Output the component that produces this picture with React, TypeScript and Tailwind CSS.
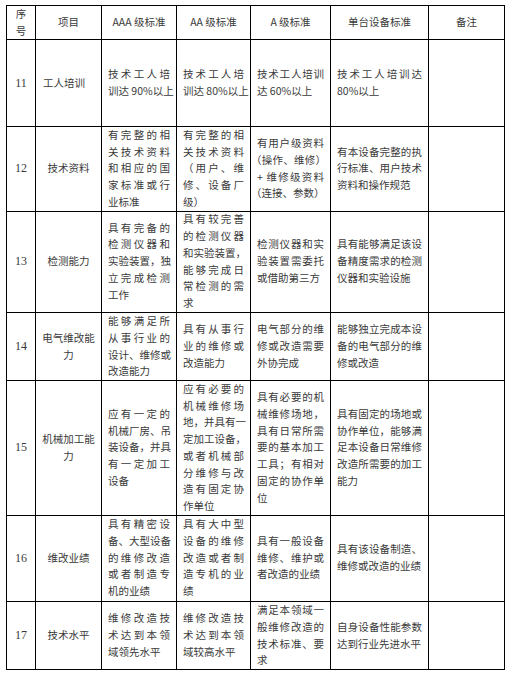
type Line = string | { t: string; cls: string };

type Row = {
  no: string;
  item: string[];
  itemLeft?: boolean;
  cols: Line[][];
  h: string;
};

const rows: Row[] = [
  {
    no: '11',
    item: ['工人培训'],
    itemLeft: true,
    h: 'h-[87px]',
    cols: [
      ['技术工人培', '训达 90%以上'],
      ['技术工人培', '训达 80%以上'],
      ['技术工人培训', '达 60%以上'],
      ['技术工人培训达', '80%以上'],
    ],
  },
  {
    no: '12',
    item: ['技术资料'],
    h: 'h-[84px]',
    cols: [
      ['有完整的相', '关技术资料', '和相应的国', '家标准或行', '业标准'],
      ['有完整的相', '关技术资料', '（用户、维', '修、设备厂', '级）'],
      [
        '有用户级资料',
        { t: '（操作、维修）', cls: '-ml-[6px] -mr-[2px]' },
        '+ 维修级资料',
        { t: '（连接、参数）', cls: '-ml-[6px] -mr-[2px]' },
      ],
      ['有本设备完整的执', '行标准、用户技术', '资料和操作规范'],
    ],
  },
  {
    no: '13',
    item: ['检测能力'],
    h: 'h-[102px]',
    cols: [
      ['具有完备的', '检测仪器和', '实验装置，独', '立完成检测', '工作'],
      ['具有较完善', '的检测仪器', '和实验装置，', '能够完成日', '常检测的需', '求'],
      ['检测仪器和实', '验装置需委托', '或借助第三方'],
      ['具有能够满足该设', '备精度需求的检测', '仪器和实验设施'],
    ],
  },
  {
    no: '14',
    item: ['电气维改能', '力'],
    h: 'h-[68px]',
    cols: [
      ['能够满足所', '从事行业的', '设计、维修或', '改造能力'],
      ['具有从事行', '业的维修或', '改造能力'],
      ['电气部分的维', '修或改造需要', '外协完成'],
      ['能够独立完成本设', '备的电气部分的维', '修或改造'],
    ],
  },
  {
    no: '15',
    item: ['机械加工能', '力'],
    h: 'h-[134px]',
    cols: [
      ['应有一定的', '机械厂房、吊', '装设备，并具', '有一定加工', '设备'],
      ['应有必要的', '机械维修场', '地，并具有一', '定加工设备，', '或者机械部', '分维修与改', '造有固定协', '作单位'],
      ['具有必要的机', '械维修场地，', '具有日常所需', '要的基本加工', '工具；有相对', '固定的协作单', '位'],
      ['具有固定的场地或', '协作单位，能够满', '足本设备日常维修', '改造所需要的加工', '能力'],
    ],
  },
  {
    no: '16',
    item: ['维改业绩'],
    h: 'h-[87px]',
    cols: [
      ['具有精密设', '备、大型设备', '的维修改造', '或者制造专', '机的业绩'],
      ['具有大中型', '设备的维修', '改造或者制', '造专机的业', '绩'],
      ['具有一般设备', '维修、维护或', '者改造的业绩'],
      ['具有该设备制造、', '维修或改造的业绩'],
    ],
  },
  {
    no: '17',
    item: ['技术水平'],
    h: 'h-[68px]',
    cols: [
      ['维修改造技', '术达到本领', '域领先水平'],
      ['维修改造技', '术达到本领', '域较高水平'],
      ['满足本领域一', '般维修改造的', '技术标准、要', '求'],
      ['自身设备性能参数', '达到行业先进水平'],
    ],
  },
];

const cell = 'border-r border-b border-black flex flex-col justify-center';

function TextCell({ lines }: { lines: Line[] }) {
  return (
    <div className={`${cell} px-[6px]`}>
      {lines.map((l, i) => {
        const t = typeof l === 'string' ? l : l.t;
        const extra = typeof l === 'string' ? '' : l.cls;
        const last = i === lines.length - 1;
        return (
          <div
            key={i}
            className={`whitespace-nowrap ${last ? 'text-left' : 'text-justify [text-align-last:justify]'} ${extra}`}
          >
            {t}
          </div>
        );
      })}
    </div>
  );
}

export default function App() {
  return (
    <div className="w-[512px] h-[678px] bg-white pt-[5px] pl-[6px] font-['Noto_Sans_CJK_SC',sans-serif] text-[10.5px] leading-[16.7px] text-[#3a3a3a]">
      <div className="w-[499px] border-l border-t border-black">
        {/* header */}
        <div className="grid grid-cols-[29px_66px_75px_74px_80px_98px_76px] h-[34px]">
          <div className={`${cell} items-center`}>
            <div>序</div>
            <div>号</div>
          </div>
          <div className={`${cell} items-center`}>项目</div>
          <div className={`${cell} items-center`}>AAA 级标准</div>
          <div className={`${cell} items-center`}>AA 级标准</div>
          <div className={`${cell} items-center`}>A 级标准</div>
          <div className={`${cell} items-center`}>单台设备标准</div>
          <div className={`${cell} items-center`}>备注</div>
        </div>

        {rows.map((r) => (
          <div key={r.no} className={`grid grid-cols-[29px_66px_75px_74px_80px_98px_76px] ${r.h}`}>
            <div className={`${cell} items-center font-['Liberation_Serif',serif] text-[12px]`}>{r.no}</div>
            <div className={`${cell} ${r.itemLeft ? 'items-start pl-[7px]' : 'items-center'}`}>
              {r.item.map((s, i) => (
                <div key={i}>{s}</div>
              ))}
            </div>
            {r.cols.map((c, i) => (
              <TextCell key={i} lines={c} />
            ))}
            <div className={cell} />
          </div>
        ))}
      </div>
    </div>
  );
}
